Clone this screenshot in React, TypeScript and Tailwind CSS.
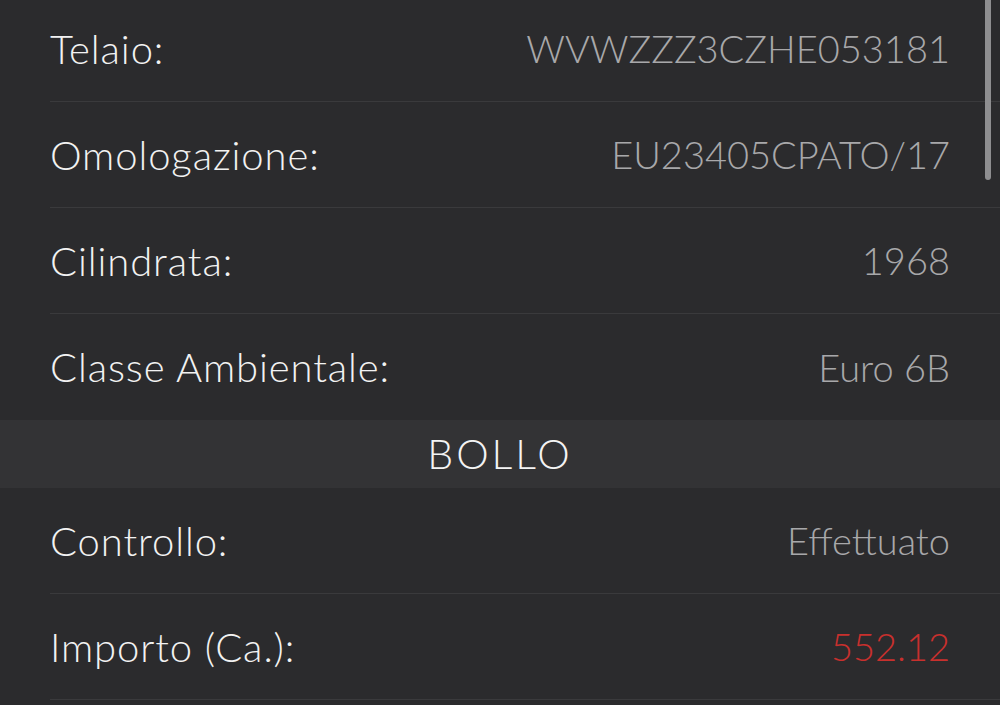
import React from "react";

type Row = { label: string; value: string; red?: boolean };

const topRows: Row[] = [
  { label: "Telaio:", value: "WVWZZZ3CZHE053181" },
  { label: "Omologazione:", value: "EU23405CPATO/17" },
  { label: "Cilindrata:", value: "1968" },
  { label: "Classe Ambientale:", value: "Euro 6B" },
];

const bolloRows: Row[] = [
  { label: "Controllo:", value: "Effettuato" },
  { label: "Importo (Ca.):", value: "552.12", red: true },
];

const InfoRow = ({ row, last }: { row: Row; last?: boolean }) => (
  <div className="pl-[50px]">
    <div
      className={`flex h-[106px] items-center justify-between pr-[50px] ${
        last ? "" : "border-b border-[#3a3a3c]"
      }`}
    >
      <span className="text-[40px] tracking-[0.9px] text-[#f2f2f2]">{row.label}</span>
      <span className={`text-[38px] ${row.red ? "text-[#c8302d]" : "text-[#a8a8aa]"}`}>
        {row.value}
      </span>
    </div>
  </div>
);

export default function App() {
  return (
    <div
      className="relative h-[705px] w-[1000px] overflow-hidden bg-[#2b2b2d] font-light"
      style={{ fontFamily: "Lato, 'Noto Sans', sans-serif" }}
    >
      <div className="-mt-[4px]">
        {topRows.map((r, i) => (
          <InfoRow key={r.label} row={r} last={i === topRows.length - 1} />
        ))}
        <div className="flex h-[68px] items-center justify-center bg-[#333335] text-[41px] tracking-[3px] text-[#f4f4f4]">
          BOLLO
        </div>
        {bolloRows.map((r) => (
          <InfoRow key={r.label} row={r} />
        ))}
      </div>
      {/* scroll indicator */}
      <div className="absolute right-[9px] top-[-4px] h-[184px] w-[6px] rounded-full bg-[#8e8e90]" />
    </div>
  );
}
